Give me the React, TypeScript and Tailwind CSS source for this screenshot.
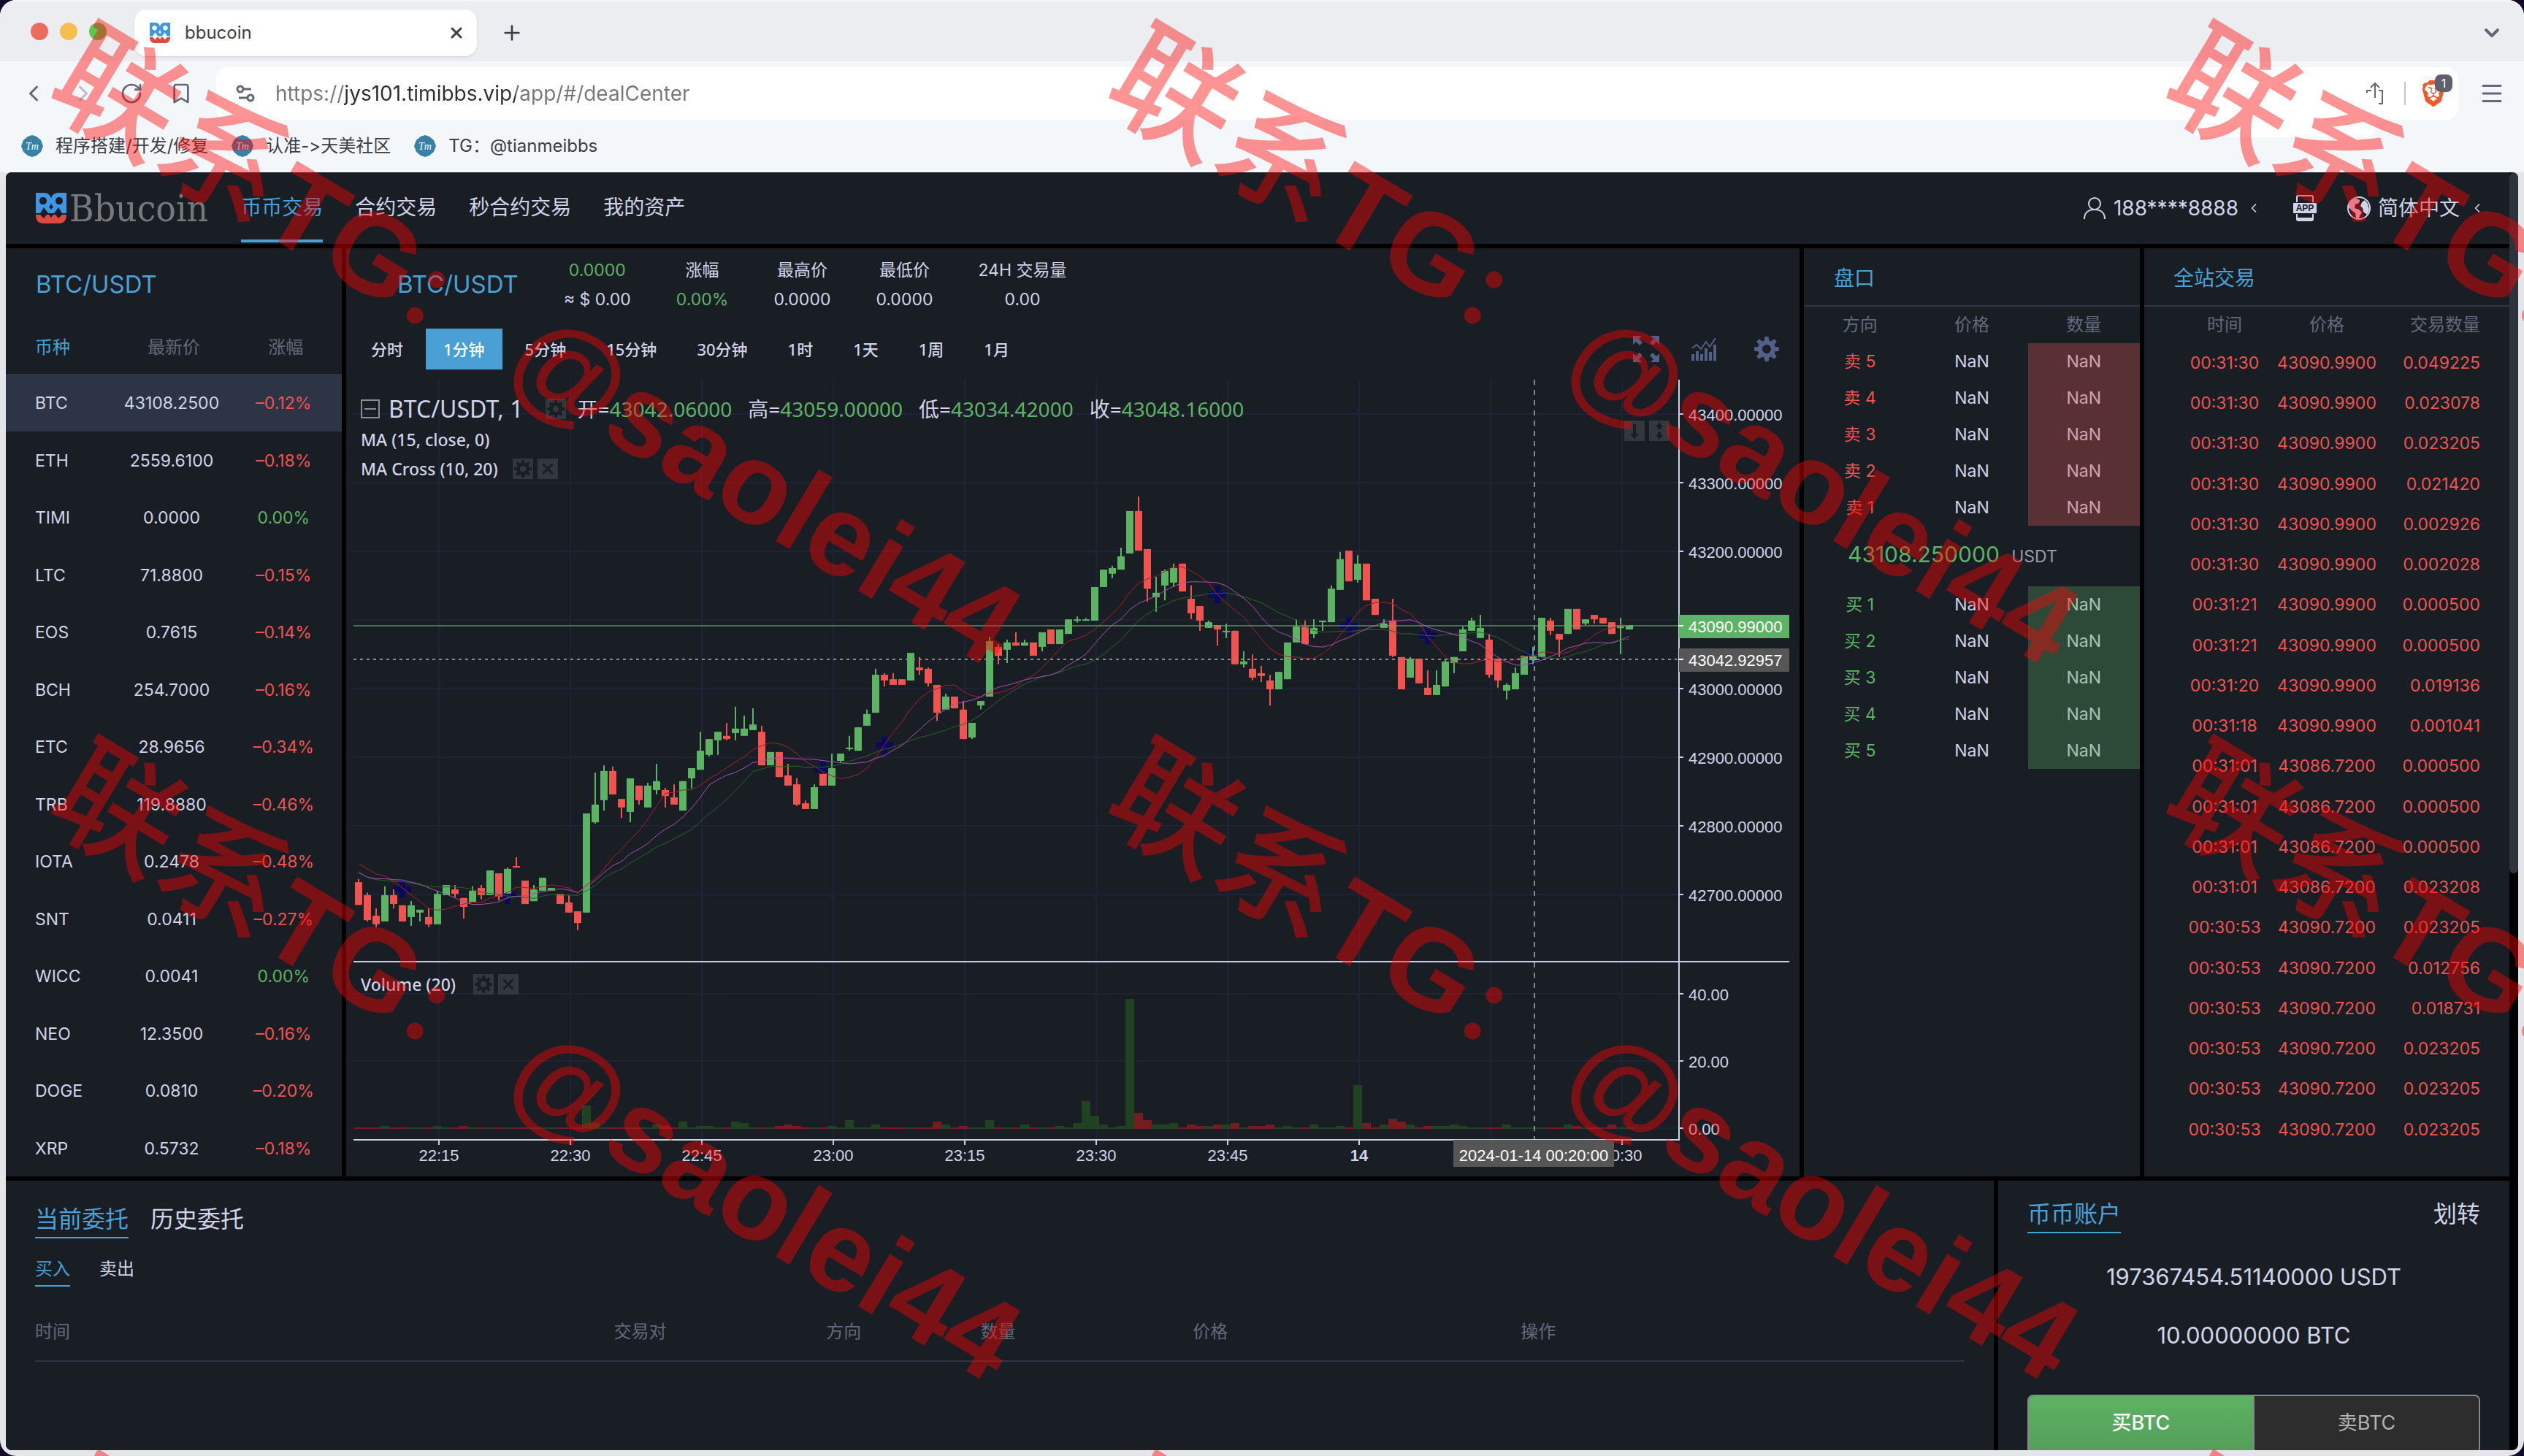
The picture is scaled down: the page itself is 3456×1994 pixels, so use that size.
import { Bookmark, ChevronDown, ChevronLeft, ChevronRight, Menu, Plus, RotateCw, X } from 'lucide-react'
import { SiBrave } from 'react-icons/si'

const coins = [
  ['BTC', '43108.2500', '–0.12%'],
  ['ETH', '2559.6100', '–0.18%'],
  ['TIMI', '0.0000', '0.00%'],
  ['LTC', '71.8800', '–0.15%'],
  ['EOS', '0.7615', '–0.14%'],
  ['BCH', '254.7000', '–0.16%'],
  ['ETC', '28.9656', '–0.34%'],
  ['TRB', '119.8880', '–0.46%'],
  ['IOTA', '0.2478', '–0.48%'],
  ['SNT', '0.0411', '–0.27%'],
  ['WICC', '0.0041', '0.00%'],
  ['NEO', '12.3500', '–0.16%'],
  ['DOGE', '0.0810', '–0.20%'],
  ['XRP', '0.5732', '–0.18%'],
]

const trades = [
  ['00:31:30', '43090.9900', '0.049225'],
  ['00:31:30', '43090.9900', '0.023078'],
  ['00:31:30', '43090.9900', '0.023205'],
  ['00:31:30', '43090.9900', '0.021420'],
  ['00:31:30', '43090.9900', '0.002926'],
  ['00:31:30', '43090.9900', '0.002028'],
  ['00:31:21', '43090.9900', '0.000500'],
  ['00:31:21', '43090.9900', '0.000500'],
  ['00:31:20', '43090.9900', '0.019136'],
  ['00:31:18', '43090.9900', '0.001041'],
  ['00:31:01', '43086.7200', '0.000500'],
  ['00:31:01', '43086.7200', '0.000500'],
  ['00:31:01', '43086.7200', '0.000500'],
  ['00:31:01', '43086.7200', '0.023208'],
  ['00:30:53', '43090.7200', '0.023205'],
  ['00:30:53', '43090.7200', '0.012756'],
  ['00:30:53', '43090.7200', '0.018731'],
  ['00:30:53', '43090.7200', '0.023205'],
  ['00:30:53', '43090.7200', '0.023205'],
  ['00:30:53', '43090.7200', '0.023205'],
]

const intervals = ['分时', '1分钟', '5分钟', '15分钟', '30分钟', '1时', '1天', '1周', '1月']

const stats = [
  { top: '0.0000', bottom: '≈ $ 0.00', topUp: true },
  { top: '涨幅', bottom: '0.00%', bottomUp: true },
  { top: '最高价', bottom: '0.0000' },
  { top: '最低价', bottom: '0.0000' },
  { top: '24H 交易量', bottom: '0.00' },
]

// high, body top, body bottom, low; a leading 1 is an up candle
const candles = [
  [0, 1254, 1264, 1336, 1336], [0, 1297, 1305, 1384, 1388], [0, 1347, 1370, 1397, 1406], [1, 1277, 1305, 1388, 1388],
  [0, 1287, 1305, 1333, 1347], [0, 1337, 1337, 1388, 1388], [1, 1324, 1337, 1374, 1402], [1, 1351, 1351, 1360, 1388],
  [0, 1347, 1374, 1397, 1406], [1, 1292, 1301, 1397, 1397], [1, 1273, 1273, 1305, 1305], [0, 1273, 1287, 1301, 1312],
  [0, 1314, 1314, 1342, 1379], [1, 1277, 1291, 1328, 1328], [0, 1273, 1282, 1305, 1318], [1, 1227, 1227, 1305, 1305],
  [0, 1236, 1236, 1310, 1322], [1, 1218, 1222, 1300, 1300], [0, 1185, 1213, 1218, 1218], [0, 1259, 1259, 1333, 1333],
  [1, 1273, 1287, 1324, 1324], [1, 1250, 1250, 1291, 1291], [1, 1282, 1282, 1291, 1291], [0, 1301, 1301, 1333, 1333],
  [0, 1305, 1328, 1360, 1360], [0, 1356, 1356, 1393, 1416], [1, 1047, 1047, 1360, 1360], [1, 918, 1019, 1075, 1079],
  [1, 895, 913, 1005, 1038], [0, 899, 913, 987, 987], [0, 1001, 1001, 1028, 1061], [1, 936, 936, 1042, 1075],
  [0, 959, 959, 1005, 1019], [1, 950, 959, 1028, 1028], [1, 890, 945, 973, 987], [0, 966, 973, 992, 1028],
  [0, 955, 996, 1019, 1019], [1, 945, 945, 1038, 1038], [1, 904, 904, 936, 968], [1, 789, 849, 909, 909],
  [1, 812, 812, 862, 867], [1, 789, 789, 816, 862], [0, 761, 802, 812, 816], [1, 710, 779, 793, 816],
  [1, 738, 779, 802, 802], [1, 715, 766, 784, 784], [0, 770, 789, 895, 895], [1, 853, 853, 895, 895],
  [0, 853, 853, 932, 932], [0, 890, 927, 959, 959], [0, 936, 955, 1019, 1023], [0, 1006, 1015, 1033, 1033],
  [1, 955, 964, 1033, 1033], [0, 922, 922, 959, 959], [1, 858, 904, 959, 959], [1, 858, 858, 881, 885],
  [1, 802, 839, 844, 849], [1, 775, 775, 849, 849], [1, 719, 733, 770, 770], [1, 590, 609, 729, 729],
  [0, 604, 609, 627, 646], [0, 604, 623, 641, 641], [0, 623, 623, 641, 641], [1, 540, 540, 627, 627],
  [0, 553, 586, 595, 609], [0, 586, 590, 636, 646], [0, 641, 641, 729, 755], [1, 669, 678, 719, 719],
  [0, 678, 678, 715, 715], [0, 692, 719, 812, 812], [1, 761, 761, 807, 812], [1, 692, 692, 706, 718],
  [1, 489, 503, 678, 678], [0, 512, 521, 549, 576], [1, 498, 507, 530, 572], [0, 475, 507, 517, 517],
  [1, 498, 507, 517, 517], [0, 507, 507, 549, 549], [1, 475, 475, 521, 535], [0, 466, 466, 512, 512],
  [1, 466, 466, 512, 512], [1, 434, 434, 480, 480], [1, 425, 434, 438, 444], [1, 430, 434, 438, 438],
  [1, 332, 332, 438, 438], [1, 277, 277, 332, 332], [1, 265, 272, 290, 304], [1, 208, 235, 277, 277],
  [1, 92, 92, 226, 226], [0, 46, 92, 217, 217], [0, 212, 212, 337, 378], [1, 300, 350, 364, 410],
  [1, 277, 281, 327, 374], [1, 258, 272, 318, 332], [0, 258, 258, 346, 346], [0, 327, 369, 415, 433],
  [0, 392, 392, 438, 470], [1, 438, 443, 461, 461], [0, 452, 452, 466, 517], [1, 448, 470, 474, 493],
  [0, 470, 470, 576, 576], [1, 535, 567, 576, 586], [0, 545, 590, 618, 627], [0, 581, 604, 613, 632],
  [0, 609, 627, 655, 706], [1, 600, 600, 655, 655], [1, 507, 507, 623, 623], [1, 434, 457, 507, 507],
  [0, 438, 457, 512, 512], [1, 434, 461, 480, 493], [1, 438, 438, 443, 470], [1, 327, 337, 443, 443],
  [1, 221, 244, 341, 341], [0, 217, 217, 314, 314], [1, 231, 258, 309, 318], [0, 258, 258, 374, 374],
  [0, 369, 369, 420, 420], [1, 434, 447, 461, 461], [0, 369, 438, 549, 553], [0, 553, 553, 655, 655],
  [1, 553, 558, 618, 618], [0, 558, 558, 636, 636], [0, 595, 650, 673, 673], [1, 595, 641, 673, 673],
  [1, 558, 567, 646, 646], [1, 553, 553, 572, 604], [1, 457, 466, 535, 535], [1, 429, 438, 470, 470],
  [1, 420, 461, 493, 493], [0, 480, 498, 609, 618], [0, 558, 558, 627, 650], [1, 636, 641, 659, 687],
  [1, 586, 604, 655, 655], [1, 549, 549, 609, 609], [1, 521, 549, 563, 576], [1, 429, 429, 553, 553],
  [0, 429, 438, 470, 484], [0, 480, 480, 498, 553], [1, 401, 401, 480, 480], [0, 401, 401, 466, 466],
  [1, 434, 434, 447, 452], [0, 420, 420, 434, 447], [0, 429, 429, 447, 447], [0, 443, 443, 480, 480],
  [1, 429, 457, 461, 544], [1, 452, 452, 466, 466],
]

// averages of the first twenty bars, whose history is off screen
const maStart: Record<number, number[]> = {
  10: [1206, 1222, 1238, 1244, 1261, 1282, 1305, 1324, 1347, 1352, 1349, 1340, 1333, 1327, 1328, 1314, 1307, 1296, 1280, 1281],
  15: [1233, 1248, 1253, 1253, 1256, 1257, 1264, 1270, 1282, 1292, 1302, 1314, 1328, 1334, 1334, 1331, 1326, 1314, 1309, 1307],
  20: [1234, 1248, 1256, 1259, 1262, 1262, 1267, 1273, 1277, 1279, 1279, 1279, 1282, 1287, 1295, 1300, 1303, 1308, 1309, 1312],
}

const crosses = [[5, 1286], [17, 1305], [53, 908], [60, 832], [98, 357], [113, 454], [122, 485], [134, 550]]

const volumes: Record<number, number> = {
  3: 4, 9: 4, 12: 4, 26: 32, 27: 8, 34: 6, 35: 4, 37: 10, 39: 4, 40: 4, 43: 10, 44: 8, 48: 4, 49: 6, 50: 4, 54: 4, 56: 12,
  59: 6, 66: 10, 67: 6, 69: 4, 72: 12, 76: 6, 80: 4, 82: 8, 83: 38, 84: 18, 85: 6, 87: 4, 88: 178, 89: 22, 90: 12, 91: 6,
  92: 6, 93: 8, 95: 6, 96: 4, 97: 4, 98: 6, 99: 6, 100: 8, 102: 4, 103: 4, 104: 6, 106: 4, 109: 6, 112: 4, 114: 60, 115: 8,
  117: 6, 118: 14, 119: 10, 120: 6, 122: 4, 123: 4, 124: 4, 125: 6, 126: 4, 131: 6, 138: 6, 139: 4, 143: 6,
}

const timeTicks = ['22:15', '22:30', '22:45', '23:00', '23:15', '23:30', '23:45', '14', '', '00:30']
const priceTicks = [43400, 43300, 43200, 43100, 43000, 42900, 42800, 42700]

const barX = (i: number) => 7 + i * 12
const barY = (v: number) => 140 + v / 2.306

function movingAverage(size: number) {
  return candles
    .map((_, i) => {
      let v = maStart[size][i]
      if (i >= 20) {
        const closes = candles.slice(i - size + 1, i + 1).map((c) => (c[0] ? c[2] : c[3]))
        v = closes.reduce((a, b) => a + b, 0) / size
      }
      return `${barX(i)},${barY(v).toFixed(1)}`
    })
    .join(' ')
}

function PriceChart() {
  return (
    <svg viewBox="0 0 1966 1091" className="block w-full" fontFamily="Liberation Sans, sans-serif" fontSize="22" fill="#d1d4e8">
      <g stroke="#1f2335" strokeWidth="2">
        {timeTicks.map((_, i) => <path key={i} d={`M${117 + i * 180} 0V1041`} />)}
        {priceTicks.map((p, i) => <path key={p} d={`M0 ${47 + i * 94}H1815`} />)}
        <path d="M0 841H1815M0 933H1815M0 1025H1815" />
      </g>
      <g fill="#0a0a5c">
        {crosses.map(([i, v]) => (
          <path key={i} d={`M${barX(i) - 4} ${barY(v) - 12}h8v8h8v8h-8v8h-8v-8h-8v-8h8z`} />
        ))}
      </g>
      {candles.map((c, i) => (
        <g key={i} fill={c[0] ? '#5db364' : '#ef5450'}>
          <rect x={barX(i) - 1} y={barY(c[1])} width="2" height={(c[4] - c[1]) / 2.306} />
          <rect x={barX(i) - 5} y={barY(c[2])} width="10" height={Math.max(2, (c[3] - c[2]) / 2.306)} />
        </g>
      ))}
      <g fill="none" strokeWidth="1">
        <polyline points={movingAverage(20)} stroke="#26632a" />
        <polyline points={movingAverage(10)} stroke="#a81f28" />
        <polyline points={movingAverage(15)} stroke="#a54fae" />
      </g>
      {candles.map((c, i) => {
        const h = volumes[i] ?? 2
        return <rect key={i} x={barX(i) - 6} y={1026 - h} width="12" height={h} fill={c[0] ? '#214220' : '#751c20'} />
      })}
      <path d="M0 337H1815" stroke="#5db364" strokeWidth="2" strokeOpacity="0.6" />
      <g stroke="#868993" strokeWidth="2">
        <path d="M0 383H1815" strokeDasharray="4 5" />
        <path d="M1617 0V1041" strokeDasharray="7 7" />
      </g>
      <g stroke="#cdd0e4" strokeWidth="2">
        <path d="M1815 0V1041" />
        <path d="M0 797H1966M0 1041H1816" />
        {priceTicks.map((p, i) => <path key={p} d={`M1815 ${47 + i * 94}h6`} />)}
        <path d="M1815 841h6M1815 933h6M1815 1025h6" />
        {timeTicks.map((_, i) => <path key={i} d={`M${117 + i * 180} 1041v7`} />)}
      </g>
      {priceTicks.filter((p) => p !== 43100).map((p) => (
        <text key={p} x="1828" y={56 + (43400 - p) * 0.94}>{p}.00000</text>
      ))}
      <text x="1828" y="850">40.00</text>
      <text x="1828" y="942">20.00</text>
      <text x="1828" y="1034">0.00</text>
      {timeTicks.map((t, i) => (
        <text key={i} x={117 + i * 180} y="1070" textAnchor="middle" fontWeight={t === '14' ? 700 : 400}>{t}</text>
      ))}
      <rect x="1815" y="322" width="151" height="32" fill="#5db364" />
      <rect x="1815" y="368" width="151" height="32" fill="#555655" />
      <rect x="1506" y="1041" width="220" height="37" fill="#555655" />
      <g fill="#fff">
        <path d="M1815 336h6v2h-6zM1815 382h6v2h-6z" />
        <text x="1828" y="346">43090.99000</text>
        <text x="1828" y="392">43042.92957</text>
        <text x="1616" y="1070" textAnchor="middle">2024-01-14 00:20:00</text>
      </g>
    </svg>
  )
}

function Gear({ className }: { className?: string }) {
  return (
    <svg viewBox="0 0 34 34" className={className} fill="currentColor" aria-hidden="true">
      {[0, 45, 90, 135].map((a) => (
        <g key={a} transform={`rotate(${a} 17 17)`}>
          <path d="M14.5 0h5l1 7h-7zM14.5 34h5l1-7h-7z" />
        </g>
      ))}
      <circle cx="17" cy="17" r="9" fill="none" stroke="currentColor" strokeWidth="6" />
    </svg>
  )
}

function Logo({ className }: { className?: string }) {
  return (
    <svg viewBox="0 0 42 42" className={className} aria-hidden="true">
      <g fill="#4095e5">
        <path fillRule="evenodd" d="M0 0h11c6 0 10 4 10 9v4c0 3-1 5-3 6l3 4v5h-4l-6-8-5 8H0zM10 6c-3 0-5 2-5 5s2 5 5 5 5-2 5-5-2-5-5-5z" />
        <path fillRule="evenodd" d="M42 0H31c-6 0-10 4-10 9v4c0 3 1 5 3 6l-3 4v5h4l6-8 5 8h6zM32 6c3 0 5 2 5 5s-2 5-5 5-5-2-5-5 2-5 5-5z" />
      </g>
      <path fill="#dd4a43" d="M0 30h6l5 5 4-5h3l3 4 3-4h3l4 5 5-5h6c0 8-4 12-10 12H10C4 42 0 38 0 30z" />
    </svg>
  )
}

function TmIcon() {
  return (
    <svg viewBox="0 0 30 30" className="size-[30px]" aria-hidden="true">
      <path d="M15 0l6 2 6 5 3 8-3 8-6 5-6 2-6-2-6-5-3-8 3-8 6-5z" fill="#3780a6" />
      <text x="15" y="20" textAnchor="middle" fontSize="14" fontStyle="italic" fontFamily="Liberation Serif, serif" fill="#fff">Tm</text>
    </svg>
  )
}

function Browser() {
  return (
    <div className="text-[#3b3e45]">
      <div className="flex h-[84px] items-center border-t-2 border-[#f5f6f8] bg-[#ebedf1]">
        <div className="ml-[42px] flex gap-4">
          <span className="size-6 rounded-full bg-[#ed6a5e]" />
          <span className="size-6 rounded-full bg-[#f5bf4f]" />
          <span className="size-6 rounded-full bg-[#61c554]" />
        </div>
        <div className="mt-1 ml-[38px] flex h-16 w-[469px] items-center rounded-2xl bg-white pr-4 pl-[21px] shadow-sm">
          <Logo className="size-7" />
          <span className="ml-5 flex-1 text-2xl">bbucoin</span>
          <button aria-label="Close tab"><X className="size-6" strokeWidth={3} /></button>
        </div>
        <button aria-label="New tab" className="mt-1 ml-8"><Plus className="size-8" strokeWidth={2} /></button>
        <button aria-label="Tabs" className="mt-1 mr-7 ml-auto text-[#646874]"><ChevronDown className="size-8" strokeWidth={3} /></button>
      </div>
      <div className="flex h-20 items-center bg-[#f4f7f9] pt-2 pl-7 text-[#646874]">
        <button aria-label="Back"><ChevronLeft className="size-9" strokeWidth={2} /></button>
        <button aria-label="Forward" className="ml-8 text-[#b9bdc6]"><ChevronRight className="size-9" strokeWidth={2} /></button>
        <button aria-label="Reload" className="ml-8"><RotateCw className="size-8" strokeWidth={2} /></button>
        <button aria-label="Bookmark" className="ml-9"><Bookmark className="size-8" strokeWidth={2} /></button>
        <div className="ml-8 flex h-18 flex-1 items-center rounded-2xl bg-white pl-[27px]">
          <svg viewBox="0 0 26 24" className="w-[26px]" fill="none" stroke="currentColor" strokeWidth="3" aria-hidden="true">
            <circle cx="6" cy="6" r="4" /><path d="M10 6h11M4 18h11" /><circle cx="20" cy="18" r="4" />
          </svg>
          <input
            aria-label="Address"
            defaultValue="https://jys101.timibbs.vip/app/#/dealCenter"
            className="ml-7 h-10 flex-1 bg-[linear-gradient(to_right,#75777e_94px,#2c2e33_94px,#2c2e33_329px,#75777e_329px)] bg-clip-text text-[28px] text-transparent outline-none"
          />
          <button aria-label="Share">
            <svg viewBox="0 0 24 30" className="w-6" fill="none" stroke="currentColor" strokeWidth="2" aria-hidden="true">
              <path d="M12 21V2M6 7l6-6 6 6M7 11H1v3M17 11h5v18h-5" />
            </svg>
          </button>
          <span className="ml-7 h-8 w-[2px] bg-[#c3c5cb]" />
          <button aria-label="Brave Shields" className="relative mr-4 ml-5 text-[#ee5b2a]">
            <SiBrave className="size-9" />
            <span className="absolute -top-2 left-5 flex size-6 items-center justify-center rounded-lg bg-[#5e606c] text-base text-white">1</span>
          </button>
        </div>
        <button aria-label="Menu" className="mr-[26px] ml-7"><Menu className="size-9" strokeWidth={2} /></button>
      </div>
      <nav className="relative flex h-18 items-center gap-8 bg-[#f4f7f9] pl-[29px] text-2xl leading-none [font-feature-settings:'calt'_0]">
        <span className="absolute top-0 right-[202px] h-6 w-[254px] rounded-b-2xl bg-white" />
        {['程序搭建/开发/修复', '认准->天美社区', 'TG：@tianmeibbs'].map((t) => (
          <a key={t} href="#" className="flex items-center gap-[17px]"><TmIcon />{t}</a>
        ))}
      </nav>
    </div>
  )
}

function SiteHeader() {
  return (
    <header className="flex h-[98px] items-center bg-[#191e25] pr-[34px] pl-[41px] text-[28px] leading-none">
      <a href="#" className="flex items-center gap-1 text-[#77797d]">
        <Logo className="size-[42px]" />
        <span className="font-['DejaVu_Serif_Condensed','DejaVu_Serif',serif] text-[51px]">Bbucoin</span>
      </a>
      <nav className="ml-[45px] flex h-full gap-11">
        {['币币交易', '合约交易', '秒合约交易', '我的资产'].map((t, i) => (
          <a key={t} href="#" className={i === 0 ? 'mb-0.5 flex items-center border-y-4 border-t-transparent border-b-[#4aa0d5] text-[#4aa0d5]' : 'flex items-center pb-0.5'}>{t}</a>
        ))}
      </nav>
      <button className="ml-auto flex items-center gap-[11px]">
        <svg viewBox="0 0 30 30" className="size-[30px]" fill="none" stroke="currentColor" strokeWidth="2" aria-hidden="true">
          <circle cx="15" cy="9" r="8" /><path d="M1 30c0-8 5-13 14-13s14 5 14 13" />
        </svg>
        188****8888
        <ChevronLeft className="size-5" strokeWidth={2} />
      </button>
      <a href="#" aria-label="APP" className="ml-11">
        <svg viewBox="0 0 32 36" className="w-8" aria-hidden="true">
          <path d="M5 10V3q0-2 2-2h18q2 0 2 2v7M5 26v7q0 2 2 2h18q2 0 2-2v-7" fill="none" stroke="currentColor" strokeWidth="2" />
          <path d="M0 11h32v14H0zM5 31h22v4H5z" fill="currentColor" />
          <text x="16" y="22" textAnchor="middle" fontSize="12" fontWeight="700" fontFamily="Liberation Sans, sans-serif" fill="#191e25">APP</text>
        </svg>
      </a>
      <button className="ml-[42px] flex items-center gap-[10px]">
        <svg viewBox="0 0 32 32" className="size-8" aria-hidden="true">
          <circle cx="16" cy="16" r="15" fill="none" stroke="currentColor" strokeWidth="2" />
          <path d="M11 2l6 3-1 4-5 2-1 5 6 2 4 4-3 5-1 4-4-1-1-7-5-4-5-5 1-6zM24 5l4 5 2 8-3 7-5-4-1-5-3-3 2-5z" fill="currentColor" />
        </svg>
        简体中文
        <ChevronLeft className="ml-1 size-5" strokeWidth={2} />
      </button>
    </header>
  )
}

function CoinList() {
  return (
    <section className="w-[460px] bg-[#191e25]">
      <h2 className="flex h-[100px] items-center pl-[41px] text-[33px] text-[#4aa0d5]">BTC/USDT</h2>
      <table className="w-full table-fixed text-center">
        <thead>
          <tr className="h-[72px] text-2xl text-[#63687a]">
            <th className="pl-10 text-left font-normal text-[#4aa0d5]">币种</th>
            <th className="font-normal">最新价</th>
            <th className="font-normal">涨幅</th>
          </tr>
        </thead>
        <tbody className="text-[23px] leading-none">
          {coins.map(([name, price, change]) => (
            <tr key={name} className="h-[78px] odd:h-[79px] first:bg-[#2c3445]">
              <td className="pt-0.5 pl-10 text-left">{name}</td>
              <td className="pt-0.5 pr-1.5">{price}</td>
              <td className={change === '0.00%' ? 'pt-0.5 pr-1.5 text-[#5db364]' : 'pt-0.5 pr-1.5 text-[#ee5350]'}>{change}</td>
            </tr>
          ))}
        </tbody>
      </table>
    </section>
  )
}

const iconBox = 'flex size-7 items-center justify-center bg-[#33373e] text-[#191e25]'

function ChartPanel() {
  return (
    <section className="min-w-0 flex-1 bg-[#191e25]">
      <div className="flex h-[100px] items-center gap-[62px] pl-[70px]">
        <h1 className="text-[33px] text-[#4aa0d5]">BTC/USDT</h1>
        {stats.map((s, i) => (
          <div key={i} className="flex flex-col items-center text-[23px] leading-10">
            <span className={s.topUp ? 'text-[#5db364]' : ''}>{s.top}</span>
            <span className={s.bottomUp ? 'text-[#5db364]' : ''}>{s.bottom}</span>
          </div>
        ))}
      </div>
      <div className="mt-2.5 flex h-14 items-center gap-[7px] pr-7 pl-2.5">
        {intervals.map((t, i) => (
          <button key={t} className={i === 1 ? 'h-14 bg-[#4aa0d5] px-6 text-[22px] font-medium text-white font-["Noto_Sans","Noto_Sans_CJK_SC",sans-serif]' : 'h-14 px-6 text-[22px] font-medium font-["Noto_Sans","Noto_Sans_CJK_SC",sans-serif]'}>{t}</button>
        ))}
        <div className="ml-auto flex items-center text-[#525f86]">
          <button aria-label="全屏">
            <svg viewBox="0 0 36 36" className="size-9" fill="currentColor" aria-hidden="true">
              {[0, 90, 180, 270].map((a) => <path key={a} d="M0 0h12l-4 4 5 5-4 4-5-5-4 4z" transform={`rotate(${a} 18 18)`} />)}
            </svg>
          </button>
          <button aria-label="指标" className="ml-11">
            <svg viewBox="0 0 34 32" className="w-[34px]" fill="currentColor" aria-hidden="true">
              <path d="M0 23h4v9H0zM6 19h4v13H6zM12 23h4v9h-4zM18 15h4v17h-4zM24 20h4v12h-4zM30 10h4v22h-4z" />
              <path d="M1 15l6-5 6 6 7-10 5 7 8-12" fill="none" stroke="currentColor" strokeWidth="2" />
            </svg>
          </button>
          <button aria-label="设置" className="ml-[52px]"><Gear className="size-[34px]" /></button>
        </div>
      </div>
      <div className="relative mt-3.5 pr-3.5 pl-2.5 font-['Noto_Sans','Noto_Sans_CJK_SC',sans-serif]">
        <PriceChart />
        <div className="absolute top-4 left-5 text-[23px] font-medium">
          <div className="flex h-12 items-center text-[28px] font-normal">
            <button aria-label="收起" className="flex size-[26px] items-center justify-center border-2 border-[#8b8d94]">
              <span className="h-[2px] w-4 bg-[#8b8d94]" />
            </button>
            <span className="ml-3 text-[32px]">BTC/USDT, 1</span>
            <button aria-label="设置" className={`ml-[30px] ${iconBox}`}><Gear className="size-6" /></button>
            {[['开', '43042.06000'], ['高', '43059.00000'], ['低', '43034.42000'], ['收', '43048.16000']].map(([k, v], i) => (
              <span key={k} className={i === 0 ? 'ml-4' : 'ml-[22px]'}>{k}=<span className="text-[#5db364]">{v}</span></span>
            ))}
          </div>
          <div className="flex h-9 items-center">MA (15, close, 0)</div>
          <div className="flex h-11 items-center">
            MA Cross (10, 20)
            <button aria-label="设置" className={`ml-5 ${iconBox}`}><Gear className="size-6" /></button>
            <button aria-label="删除" className={`ml-1.5 ${iconBox}`}><X className="size-6" strokeWidth={3} /></button>
          </div>
        </div>
        <div className="absolute top-[810px] left-5 flex h-9 items-center text-[23px] font-medium">
          Volume (20)
          <button aria-label="设置" className={`ml-6 ${iconBox}`}><Gear className="size-6" /></button>
          <button aria-label="删除" className={`ml-1.5 ${iconBox}`}><X className="size-6" strokeWidth={3} /></button>
        </div>
        <div className="absolute top-14 right-[178px] flex gap-1.5">
          <button aria-label="下移" className={iconBox}>
            <svg viewBox="0 0 28 28" fill="currentColor" aria-hidden="true"><path d="M12 5h4v13h4l-6 7-6-7h4z" /></svg>
          </button>
          <button aria-label="最大化" className={iconBox}>
            <svg viewBox="0 0 28 28" fill="currentColor" aria-hidden="true"><path d="M14 2l5 7h-3v3h-4V9H9zM14 26l5-7h-3v-3h-4v3H9z" /></svg>
          </button>
        </div>
      </div>
    </section>
  )
}

function BookRows({ side }: { side: '卖' | '买' }) {
  const sell = side === '卖'
  return (
    <tbody>
      {(sell ? [5, 4, 3, 2, 1] : [1, 2, 3, 4, 5]).map((n) => (
        <tr key={n} className="h-[50px] text-[23px] leading-none">
          <td className={sell ? 'text-[#ee5350]' : 'text-[#5db364]'}>{side} {n}</td>
          <td>NaN</td>
          <td className={sell ? 'bg-[#593034] text-[#d0a5b0]' : 'bg-[#2d4a38] text-[#a7c4b4]'}>NaN</td>
        </tr>
      ))}
    </tbody>
  )
}

function OrderBook() {
  return (
    <section className="w-[460px] bg-[#191e25]">
      <h2 className="flex h-20 items-center border-b-2 border-[#303541] pt-1 pl-[41px] text-[28px] text-[#4aa0d5]">盘口</h2>
      <table className="w-full table-fixed text-center">
        <thead>
          <tr className="h-[50px] text-2xl leading-none text-[#63687a]">
            <th className="font-normal">方向</th>
            <th className="font-normal">价格</th>
            <th className="font-normal">数量</th>
          </tr>
        </thead>
        <BookRows side="卖" />
        <tbody>
          <tr className="h-[83px]">
            <td colSpan={3} className="pb-1 pl-[60px] text-left text-[30px] text-[#5db364]">
              43108.250000 <span className="ml-2 text-[23px] text-[#9a9ca5]">USDT</span>
            </td>
          </tr>
        </tbody>
        <BookRows side="买" />
      </table>
    </section>
  )
}

function Trades() {
  return (
    <section className="w-[500px] bg-[#191e25]">
      <h2 className="flex h-20 items-center border-b-2 border-[#303541] pt-1 pl-10 text-[28px] text-[#4aa0d5]">全站交易</h2>
      <table className="ml-10 w-[420px] table-fixed">
        <colgroup>
          <col className="w-[140px]" />
          <col className="w-[140px]" />
          <col className="w-[140px]" />
        </colgroup>
        <thead>
          <tr className="h-[50px] text-2xl leading-none text-[#63687a]">
            <th className="font-normal">时间</th>
            <th className="font-normal">价格</th>
            <th className="text-right font-normal">交易数量</th>
          </tr>
        </thead>
        <tbody className="text-[23px] leading-none text-[#ee5350]">
          {trades.map(([time, price, qty], i) => (
            <tr key={i} className="h-[55px] nth-[4n]:h-14">
              <td className="text-center">{time}</td>
              <td className="text-center">{price}</td>
              <td className="text-right">{qty}</td>
            </tr>
          ))}
        </tbody>
      </table>
    </section>
  )
}

function Orders() {
  return (
    <section className="flex-1 bg-[#191e25] px-10 pt-[33px] leading-none">
      <div className="flex gap-[30px] text-[32px]">
        <button className="border-b-2 border-[#4aa0d5] pt-1 pb-2 text-[#4aa0d5]">当前委托</button>
        <button className="border-b-2 border-transparent pt-1 pb-2">历史委托</button>
      </div>
      <div className="mt-[26px] flex gap-10 text-2xl">
        <button className="border-b-2 border-[#4aa0d5] pb-1.5 text-[#4aa0d5]">买入</button>
        <button className="border-b-2 border-transparent pb-1.5">卖出</button>
      </div>
      <table className="mt-[22px] w-full table-fixed text-left text-2xl text-[#63687a]">
        <colgroup>
          <col className="w-[30%]" />
          <col className="w-[11%]" />
          <col className="w-[8%]" />
          <col className="w-[11%]" />
          <col className="w-[17%]" />
          <col />
        </colgroup>
        <thead>
          <tr className="h-[80px] border-b-2 border-[#303541]">
            {['时间', '交易对', '方向', '数量', '价格', '操作'].map((t) => <th key={t} className="font-normal">{t}</th>)}
          </tr>
        </thead>
      </table>
    </section>
  )
}

function Account() {
  return (
    <section className="w-[700px] overflow-hidden bg-[#191e25] px-10 pt-7">
      <div className="flex items-start justify-between text-[32px] leading-none">
        <h2 className="border-b-2 border-[#4aa0d5] pt-0.5 pb-2 text-[#4aa0d5]">币币账户</h2>
        <button className="pt-0.5">划转</button>
      </div>
      <p className="mt-5 text-center text-[31px] leading-[80px]">197367454.51140000 USDT</p>
      <p className="text-center text-[31px] leading-[80px]">10.00000000 BTC</p>
      <div className="mt-[41px] flex h-[88px] overflow-hidden rounded-lg border-2 border-[#868788] text-[27px]">
        <button className="flex-1 bg-linear-to-b from-[#5db364] to-[#539c58] pb-2.5 font-medium text-white">买BTC</button>
        <button className="flex-1 border-l-2 border-[#868788] bg-[#2d2d2d] pb-2.5 text-[#b3b3b3]">卖BTC</button>
      </div>
    </section>
  )
}

function Watermark() {
  return (
    <div aria-hidden="true" className="pointer-events-none absolute inset-0 overflow-hidden font-medium text-[#ff0000]/42 select-none">
      {[0, 1, 2].flatMap((row) => [0, 1, 2].map((col) => (
        <div
          key={`${row}-${col}`}
          className="absolute origin-top-left rotate-[31deg] font-['Liberation_Sans','Noto_Sans_CJK_SC',sans-serif] text-[170px] leading-none whitespace-nowrap"
          style={{ left: 132 + col * 1448, top: 14 + row * 980 }}
        >
          联系<span className="text-[158px] font-bold">TG<span className="mr-[55px] text-[120px]">：</span>@saolei44</span>
        </div>
      )))}
    </div>
  )
}

export default function App() {
  return (
    <div className="relative h-screen overflow-hidden bg-[#12082a] font-['Inter','Noto_Sans_CJK_SC',sans-serif]">
      <div className="flex h-full flex-col overflow-hidden rounded-[22px] bg-[#e4e5e8]">
        <Browser />
        <main className="mx-2 mb-2 flex min-h-0 flex-1 overflow-hidden rounded-lg bg-black text-[#d1d4e8]">
          <div className="flex min-w-0 flex-1 flex-col gap-1.5">
            <SiteHeader />
            <div className="flex h-[1271px] shrink-0 gap-1.5">
              <CoinList />
              <ChartPanel />
              <OrderBook />
              <Trades />
            </div>
            <div className="flex min-h-0 flex-1 gap-1.5">
              <Orders />
              <Account />
            </div>
          </div>
          <div className="w-3">
            <div className="h-[960px] rounded-full bg-[#2e323b]" />
          </div>
        </main>
      </div>
      <Watermark />
    </div>
  )
}
